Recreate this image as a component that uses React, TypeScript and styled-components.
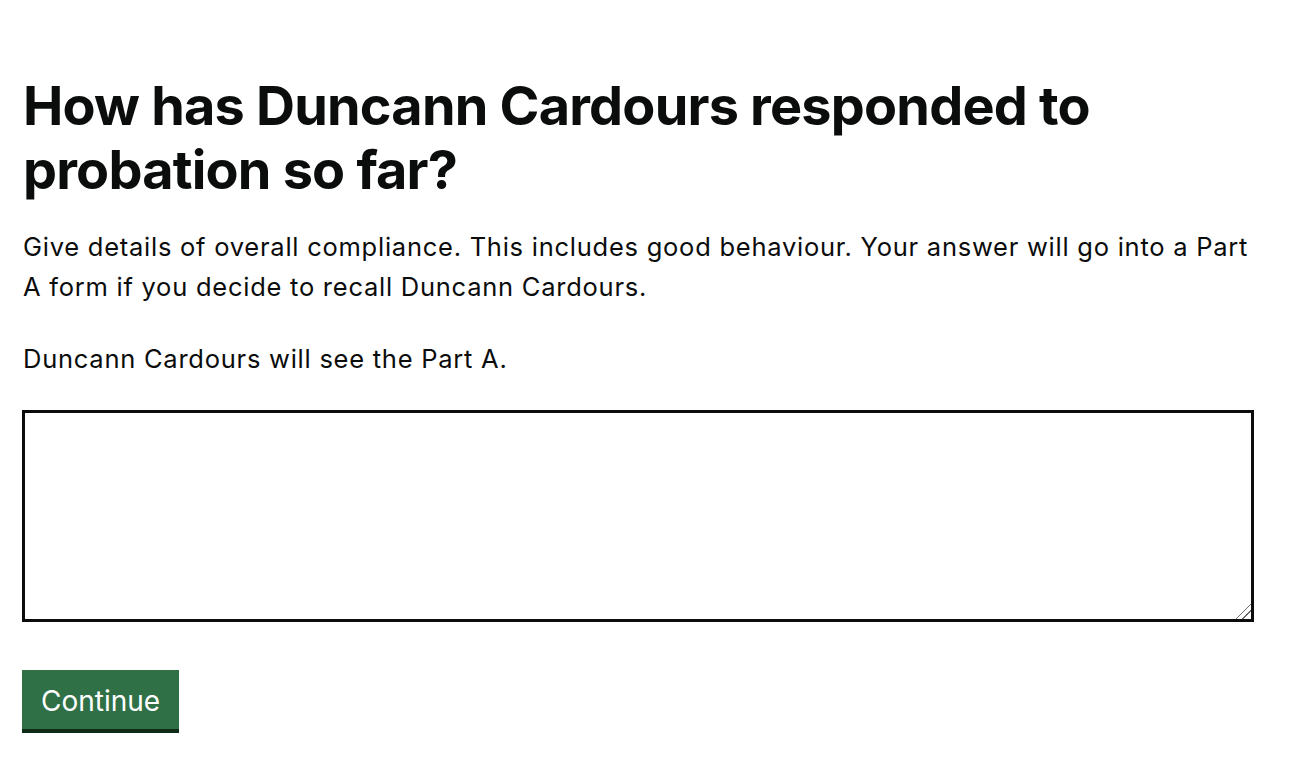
import React from "react";
import styled, { createGlobalStyle } from "styled-components";

const GlobalStyle = createGlobalStyle`
  html, body { margin: 0; padding: 0; background: #ffffff; }
  body {
    font-family: "Inter", "Liberation Sans", Arial, sans-serif;
    color: #0b0c0c;
    -webkit-font-smoothing: antialiased;
  }
`;

const Main = styled.main`
  padding: 74px 40px 40px 22px;
  display: flex;
  flex-direction: column;
`;

const Heading = styled.h1`
  margin: 0 0 25px 1px;
  font-size: 54px;
  line-height: 64px;
  font-weight: 700;
  letter-spacing: -0.8px;
`;

const Hint = styled.p`
  margin: 0 0 32px 1px;
  font-size: 25.5px;
  line-height: 40px;
  font-weight: 400;
  letter-spacing: 0.75px;

  &:last-of-type {
    margin-bottom: 31px;
  }
`;

const TextArea = styled.textarea`
  box-sizing: border-box;
  width: 1232px;
  height: 212px;
  margin: 0 0 48px 0;
  border: 3px solid #0b0c0c;
  border-radius: 0;
  padding: 8px;
  font-family: inherit;
  font-size: 24px;
  outline: none;
  resize: vertical;

  &::-webkit-resizer {
    width: 16px;
    height: 16px;
    background: linear-gradient(
      135deg,
      transparent 0 47%,
      #6b6b6b 47% 53%,
      transparent 53% 70%,
      #6b6b6b 70% 76%,
      transparent 76% 100%
    );
  }
`;

const Button = styled.button`
  align-self: flex-start;
  box-sizing: border-box;
  background: #2f7046;
  color: #ffffff;
  border: 0;
  border-radius: 0;
  box-shadow: 0 4px 0 #0e2b18;
  padding: 4px 19px 0;
  height: 59px;
  font-family: inherit;
  font-size: 28px;
  line-height: 55px;
  cursor: pointer;
`;

export default function App() {
  return (
    <>
      <GlobalStyle />
      <Main>
        <Heading>How has Duncann Cardours responded to probation so far?</Heading>
        <Hint>
          Give details of overall compliance. This includes good behaviour. Your answer will go into a Part A form if you decide to recall Duncann Cardours.
        </Hint>
        <Hint>Duncann Cardours will see the Part A.</Hint>
        <TextArea aria-label="How has Duncann Cardours responded to probation so far?" />
        <Button type="button">Continue</Button>
      </Main>
    </>
  );
}
